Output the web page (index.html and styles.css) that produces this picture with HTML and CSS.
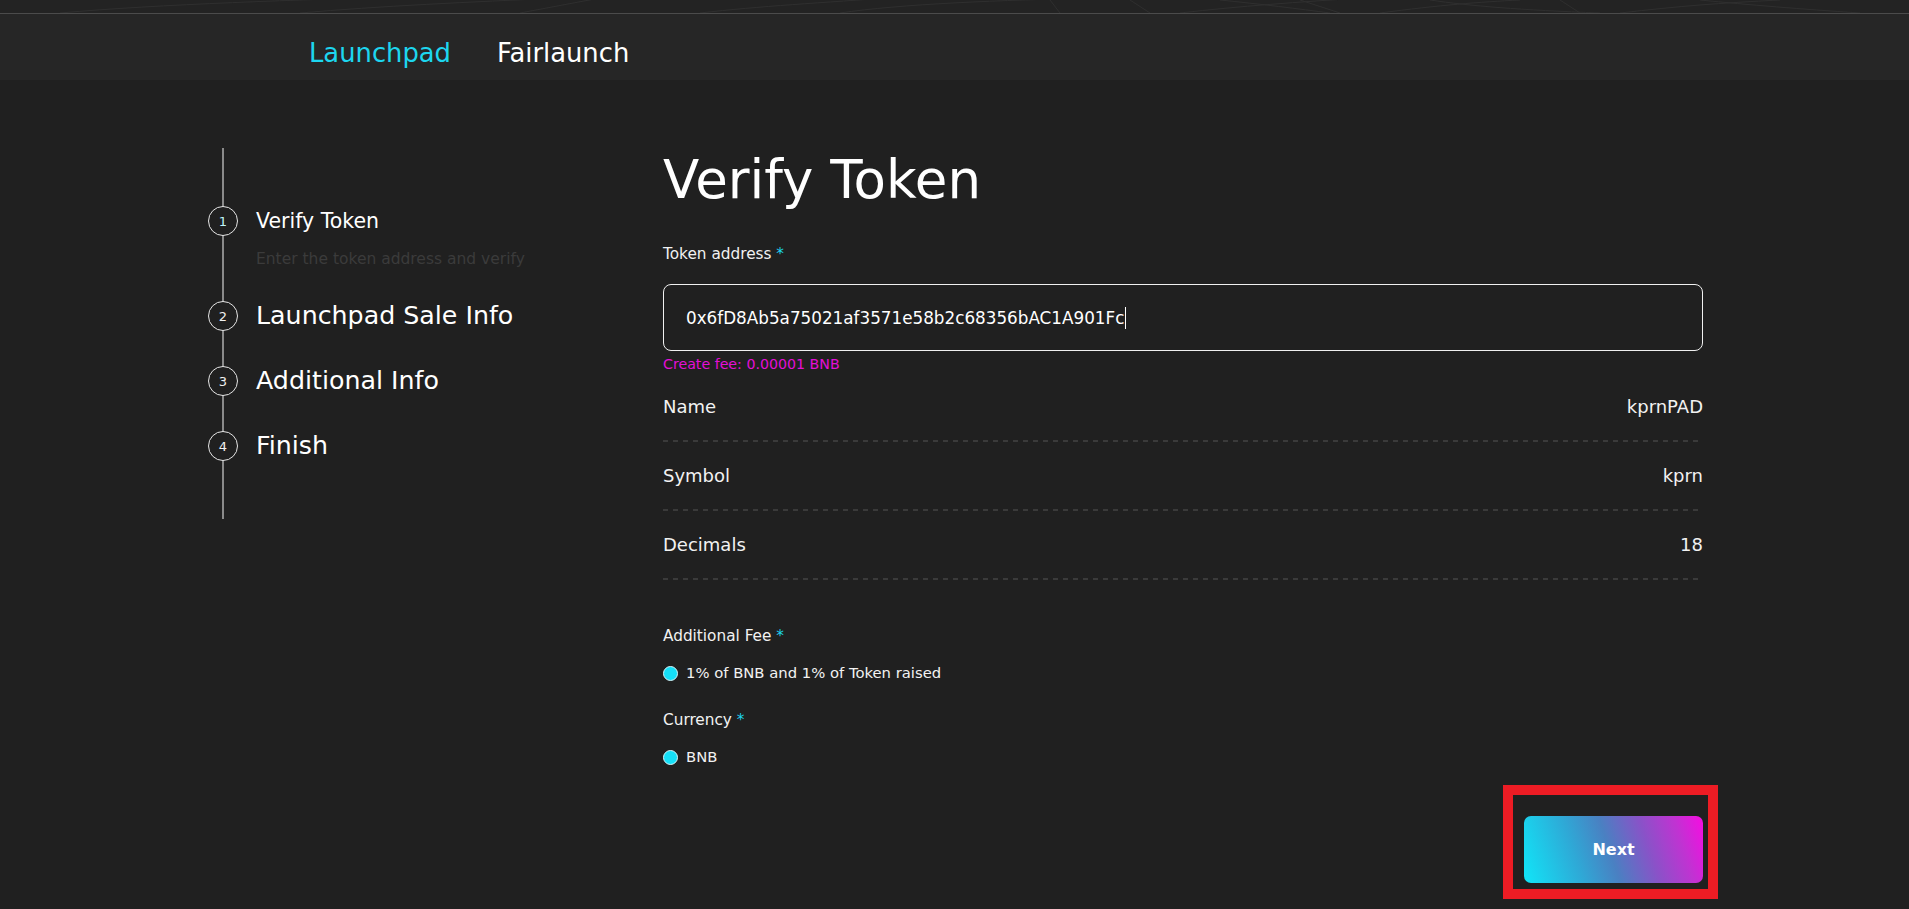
FILE: index.html
```html
<!DOCTYPE html>
<html lang="en">
<head>
<meta charset="utf-8">
<title>Create Launchpad - Verify Token</title>
<link rel="stylesheet" href="styles.css">
</head>
<body>
  <div class="topstrip">
    <svg class="pattern" width="1909" height="13" viewBox="0 0 1909 13" preserveAspectRatio="none">
      <g fill="none" stroke="#2f2f2f" stroke-width="1">
        <path d="M60 13 C 160 4, 300 0, 420 -4"/>
        <path d="M300 13 C 380 6, 470 2, 560 -2"/>
        <path d="M520 13 L 600 -2"/>
        <path d="M700 13 C 760 6, 820 3, 900 -3"/>
        <path d="M840 13 C 900 4, 1000 0, 1100 -2"/>
        <path d="M1050 0 L 1060 13"/>
        <path d="M1130 0 L 1150 13"/>
        <path d="M1180 13 C 1240 6, 1300 2, 1360 -2"/>
        <path d="M1220 0 C 1260 4, 1300 9, 1330 13"/>
        <path d="M1300 0 L 1340 13"/>
        <path d="M1380 13 C 1440 5, 1480 2, 1520 0"/>
        <path d="M1430 0 C 1470 6, 1520 10, 1600 13"/>
        <path d="M1560 0 L 1580 13"/>
        <path d="M1620 13 C 1680 6, 1720 3, 1780 0"/>
        <path d="M1700 0 C 1750 5, 1800 9, 1860 13"/>
      </g>
    </svg>
  </div>
  <header class="topnav">
    <a class="navlink active" href="#">Launchpad</a>
    <a class="navlink" href="#">Fairlaunch</a>
  </header>

  <main class="page">
    <aside class="sidebar">
      <ol class="steps">
        <li class="step current">
          <span class="num">1</span>
          <div class="stepbody">
            <div class="steptitle small">Verify Token</div>
            <div class="stepdesc">Enter the token address and verify</div>
          </div>
        </li>
        <li class="step">
          <span class="num">2</span>
          <div class="stepbody"><div class="steptitle">Launchpad Sale Info</div></div>
        </li>
        <li class="step">
          <span class="num">3</span>
          <div class="stepbody"><div class="steptitle">Additional Info</div></div>
        </li>
        <li class="step">
          <span class="num">4</span>
          <div class="stepbody"><div class="steptitle">Finish</div></div>
        </li>
      </ol>
    </aside>

    <section class="content">
      <h1 class="title">Verify Token</h1>

      <label class="label label-token">Token address <span class="req">*</span></label>
      <div class="inputbox">
        <span class="inputtext">0x6fD8Ab5a75021af3571e58b2c68356bAC1A901Fc</span><span class="caret"></span>
      </div>
      <div class="fee">Create fee: 0.00001 BNB</div>

      <div class="infotable">
        <div class="row"><span>Name</span><span>kprnPAD</span></div>
        <div class="row"><span>Symbol</span><span>kprn</span></div>
        <div class="row"><span>Decimals</span><span>18</span></div>
      </div>

      <div class="label label-fee">Additional Fee <span class="req">*</span></div>
      <div class="radio"><span class="dot"></span><span>1% of BNB and 1% of Token raised</span></div>

      <div class="label label-currency">Currency <span class="req">*</span></div>
      <div class="radio"><span class="dot"></span><span>BNB</span></div>

      <div class="actions">
        <button class="next" type="button">Next<span class="highlight"></span></button>
      </div>
    </section>
  </main>
</body>
</html>
```

FILE: styles.css
```css
* {
  box-sizing: border-box;
}

html, body {
  margin: 0;
  padding: 0;
}

body {
  background: #202020;
  color: #ffffff;
  font-family: "DejaVu Sans", "Noto Sans", sans-serif;
  width: 1909px;
  height: 909px;
  overflow: hidden;
}

.topstrip {
  height: 14px;
  background: #232323;
  border-bottom: 1px solid #4b4b4b;
}

.pattern {
  display: block;
}

.topnav {
  height: 66px;
  background: #262626;
  display: flex;
  align-items: flex-start;
  gap: 46px;
  padding: 24px 0 0 309px;
}

.navlink {
  font-size: 25.8px;
  line-height: 30px;
  color: #ffffff;
  text-decoration: none;
}

.navlink.active {
  color: #1dd6ef;
}

.page {
  display: flex;
  padding: 68px 206px 0 208px;
}

.sidebar {
  width: 455px;
  flex: none;
}

.steps {
  list-style: none;
  margin: 0;
  padding: 58px 0 58px;
  position: relative;
  display: flex;
  flex-direction: column;
  gap: 35px;
}

.steps::before {
  content: "";
  position: absolute;
  left: 14px;
  top: 0;
  bottom: 0;
  width: 2px;
  background: #8a8a8a;
}

.step {
  display: flex;
  align-items: flex-start;
  gap: 18px;
}

.num {
  position: relative;
  z-index: 1;
  flex: none;
  width: 30px;
  height: 30px;
  border: 1.5px solid #e6e6e6;
  border-radius: 50%;
  background: #202020;
  display: flex;
  align-items: center;
  justify-content: center;
  font-size: 13px;
  color: #f0f0f0;
}

.step.current .num {
  color: #bff4fb;
}

.steptitle {
  font-size: 25.3px;
  line-height: 30px;
  color: #ffffff;
  white-space: nowrap;
}

.steptitle.small {
  font-size: 20.5px;
}

.stepdesc {
  margin-top: 13px;
  font-size: 15.5px;
  line-height: 20px;
  color: #3b3b3b;
  white-space: nowrap;
}

.step.current {
  margin-bottom: -3px;
}

.content {
  flex: 1;
  display: flex;
  flex-direction: column;
}

.title {
  margin: 0;
  font-size: 53px;
  font-weight: 400;
  line-height: 64px;
  color: #ffffff;
}

.label {
  font-size: 15.3px;
  line-height: 20px;
  color: #f2f2f2;
}

.label-token {
  margin-top: 32px;
}

.req {
  color: #1dd6ef;
}

.inputbox {
  margin-top: 20px;
  height: 67px;
  border: 1.5px solid #f0f0f0;
  border-radius: 8px;
  padding: 0 22px;
  display: flex;
  align-items: center;
}

.inputtext {
  font-size: 16.8px;
  color: #ffffff;
  white-space: nowrap;
}

.caret {
  display: inline-block;
  width: 1px;
  height: 22px;
  background: #ffffff;
  margin-left: 1px;
}

.fee {
  margin-top: 4px;
  font-size: 14.2px;
  line-height: 18px;
  color: #e30fd6;
}

.infotable {
  display: flex;
  flex-direction: column;
}

.row {
  display: flex;
  justify-content: space-between;
  align-items: center;
  font-size: 18px;
  line-height: 24px;
  color: #f2f2f2;
  padding: 22px 0 23px;
  background-image: repeating-linear-gradient(to right, #3a3a3a 0 5px, transparent 5px 10px);
  background-size: 100% 2px;
  background-repeat: no-repeat;
  background-position: left bottom;
}

.label-fee {
  margin-top: 46px;
}

.label-currency {
  margin-top: 27px;
}

.radio {
  margin-top: 17px;
  display: flex;
  align-items: center;
  gap: 8px;
  font-size: 14.8px;
  line-height: 20px;
  color: #f2f2f2;
}

.dot {
  width: 15px;
  height: 15px;
  border-radius: 50%;
  background: #15e0f8;
  border: 1px solid #d4f6fb;
  flex: none;
}

.actions {
  margin-top: 49px;
  display: flex;
  justify-content: flex-end;
}

.next {
  position: relative;
  width: 179px;
  height: 67px;
  border: none;
  border-radius: 7px;
  background: linear-gradient(72deg, #10e6f8 0%, #2fa8d6 30%, #4a80c2 48%, #8a52c8 68%, #c033d2 85%, #f70ce2 100%);
  color: #ffffff;
  font-family: "DejaVu Sans", sans-serif;
  font-weight: 700;
  font-size: 16px;
  cursor: pointer;
}

.highlight {
  position: absolute;
  left: -21px;
  top: -31px;
  right: -15px;
  bottom: -16px;
  border: 10px solid #ed1c24;
  pointer-events: none;
}
```
